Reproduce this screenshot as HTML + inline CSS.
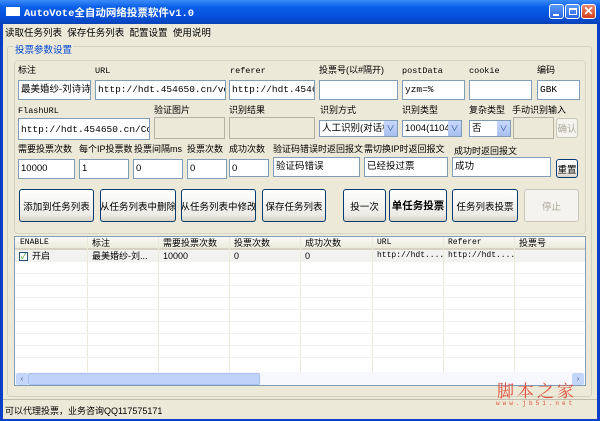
<!DOCTYPE html>
<html><head><meta charset="utf-8"><style>
*{margin:0;padding:0;box-sizing:border-box}
body{width:600px;height:421px;overflow:hidden;background:#0a3fc8;font-family:"Liberation Sans","Noto Sans CJK SC",sans-serif;font-size:10px;color:#000;position:relative}
.a{position:absolute}
#title{left:0;top:0;width:600px;height:24px;background:linear-gradient(#3a8cf8,#0a5ee8 30%,#0550dc 70%,#0842b8)}
#client{left:3px;top:24px;width:594px;height:395px;background:#ece9d8}
.tb{top:4px;width:15px;height:15px;border:1px solid #fff;border-radius:3px;background:linear-gradient(#5a9af8,#2a66e0)}
.lbl{position:absolute;font-size:9px;white-space:nowrap;line-height:12px}
.mono{font-family:"Liberation Mono",monospace;font-size:8.5px}
.in{position:absolute;background:#fff;border:1px solid #7f9db9;font-size:9.5px;padding:2px 2px;white-space:nowrap;overflow:hidden;height:20px;line-height:13px}
.gr{background:#ece9d8}
.btn{position:absolute;border:1px solid #003c74;border-radius:3px;background:linear-gradient(#fff,#ecebe6 80%,#d6d0c5);font-size:9.5px;display:flex;align-items:center;justify-content:center;white-space:nowrap}
.col{position:absolute;top:0;bottom:0;border-left:1px solid #ece9d8}
.hd{position:absolute;top:0;font-size:9px;white-space:nowrap;line-height:12px}
.dd{position:absolute;right:0;top:0;width:13px;height:15px;background:linear-gradient(#c8d8fb,#a8c0f0);color:#3050a0;font-size:8px;text-align:center;line-height:15px}
</style></head><body>
<div id="title" class="a"></div>
<div class="a" style="left:6px;top:7px;width:14px;height:9px;background:#fff"></div>
<div class="a" style="left:24px;top:5px;color:#fff;font-weight:bold;font-size:10.5px;font-family:'Liberation Mono','Noto Sans CJK SC',monospace">AutoVote全自动网络投票软件v1.0</div>
<div class="a tb" style="left:549px"><div class="a" style="left:3px;top:9px;width:6px;height:2px;background:#fff"></div></div>
<div class="a tb" style="left:565px"><div class="a" style="left:3px;top:3px;width:8px;height:7px;border:1px solid #fff;border-top-width:2px"></div></div>
<div class="a tb" style="left:581px;background:linear-gradient(#e88a70,#d4401a);color:#fff;font-weight:bold;text-align:center;line-height:13px;font-size:12px">✕</div>
<div id="client" class="a"></div>
<div class="a" style="left:5px;top:25px;font-size:9.5px">读取任务列表&nbsp; 保存任务列表&nbsp; 配置设置&nbsp; 使用说明</div>
<div class="a" style="left:7px;top:46px;width:585px;height:351px;border:1px solid #d0d0bf;border-radius:3px"></div>
<div class="a" style="left:14px;top:42px;color:#0046d5;font-size:9.5px;background:#ece9d8;padding:0 1px">投票参数设置</div>
<div class="a" style="left:14px;top:60px;width:572px;height:174px;border:1px solid #d8d5c4;border-radius:4px"></div>

<div class="lbl" style="left:18px;top:64px">标注</div>
<div class="lbl mono" style="left:95px;top:65px">URL</div>
<div class="lbl mono" style="left:230px;top:65px">referer</div>
<div class="lbl" style="left:319px;top:64px">投票号(以#隔开)</div>
<div class="lbl mono" style="left:402px;top:65px">postData</div>
<div class="lbl mono" style="left:469px;top:65px">cookie</div>
<div class="lbl" style="left:537px;top:64px">编码</div>
<div class="in" style="left:18px;top:80px;width:73px">最美婚纱-刘诗诗</div>
<div class="in mono" style="left:95px;top:80px;width:131px">http://hdt.454650.cn/vote2.as</div>
<div class="in mono" style="left:229px;top:80px;width:86px">http://hdt.454650.c</div>
<div class="in" style="left:319px;top:80px;width:79px"></div>
<div class="in mono" style="left:402px;top:80px;width:63px">yzm=%</div>
<div class="in" style="left:469px;top:80px;width:63px"></div>
<div class="in mono" style="left:537px;top:80px;width:43px">GBK</div>

<div class="lbl mono" style="left:18px;top:105px">FlashURL</div>
<div class="lbl" style="left:154px;top:104px">验证图片</div>
<div class="lbl" style="left:229px;top:104px">识别结果</div>
<div class="lbl" style="left:320px;top:104px">识别方式</div>
<div class="lbl" style="left:402px;top:104px">识别类型</div>
<div class="lbl" style="left:469px;top:104px">复杂类型</div>
<div class="lbl" style="left:512px;top:104px">手动识别输入</div>
<div class="in mono" style="left:18px;top:118px;width:132px;height:22px;padding-top:4px">http://hdt.454650.cn/Code_6.A</div>
<div class="in gr" style="left:154px;top:117px;width:71px;height:22px;border-color:#b5b2a5"></div>
<div class="in gr" style="left:229px;top:117px;width:86px;height:22px;border-color:#b5b2a5"></div>
<div class="in" style="left:319px;top:120px;width:79px;height:17px;padding:1px 2px">人工识别(对话框<div class="dd">∨</div></div>
<div class="in" style="left:402px;top:120px;width:60px;height:17px;padding:1px 2px">1004(1104)<div class="dd">∨</div></div>
<div class="in" style="left:469px;top:120px;width:42px;height:17px;padding:1px 2px">否<div class="dd">∨</div></div>
<div class="in gr" style="left:513px;top:117px;width:41px;height:22px;border-color:#b5b2a5"></div>
<div class="btn" style="left:556px;top:118px;width:22px;height:20px;border-color:#c9c7ba;color:#aca899;background:#f4f3ee">确认</div>

<div class="lbl" style="left:18px;top:143px">需要投票次数</div>
<div class="lbl" style="left:79px;top:143px">每个IP投票数</div>
<div class="lbl" style="left:134px;top:143px">投票间隔ms</div>
<div class="lbl" style="left:187px;top:143px">投票次数</div>
<div class="lbl" style="left:229px;top:143px">成功次数</div>
<div class="lbl" style="left:273px;top:143px">验证码错误时返回报文</div>
<div class="lbl" style="left:364px;top:143px">需切换IP时返回报文</div>
<div class="lbl" style="left:454px;top:145px">成功时返回报文</div>
<div class="in" style="left:18px;top:159px;width:57px">10000</div>
<div class="in" style="left:79px;top:159px;width:50px">1</div>
<div class="in" style="left:133px;top:159px;width:50px">0</div>
<div class="in" style="left:187px;top:159px;width:40px">0</div>
<div class="in" style="left:229px;top:159px;width:40px;height:18px">0</div>
<div class="in" style="left:273px;top:157px;width:87px;height:20px">验证码错误</div>
<div class="in" style="left:364px;top:157px;width:84px;height:20px">已经投过票</div>
<div class="in" style="left:452px;top:157px;width:99px;height:20px">成功</div>
<div class="btn" style="left:556px;top:159px;width:22px;height:19px">重置</div>

<div class="btn" style="left:19px;top:189px;width:75px;height:33px">添加到任务列表</div>
<div class="btn" style="left:100px;top:189px;width:76px;height:33px">从任务列表中删除</div>
<div class="btn" style="left:181px;top:189px;width:75px;height:33px">从任务列表中修改</div>
<div class="btn" style="left:262px;top:189px;width:64px;height:33px">保存任务列表</div>
<div class="btn" style="left:343px;top:189px;width:43px;height:33px">投一次</div>
<div class="btn" style="left:389px;top:189px;width:58px;height:33px;font-weight:bold;font-size:10.5px">单任务投票</div>
<div class="btn" style="left:452px;top:189px;width:66px;height:33px">任务列表投票</div>
<div class="btn" style="left:524px;top:189px;width:55px;height:33px;border-color:#c9c7ba;color:#aca899;background:#f4f3ee">停止</div>

<div class="a" style="left:14px;top:236px;width:572px;height:150px;background:#fff;border:1px solid #7f9db9;overflow:hidden">
 <div class="a" style="left:0;top:0;width:572px;height:13px;background:linear-gradient(#fafaf7,#ebeadb);border-bottom:2px solid #d6d2c2"></div>
 <div class="a" style="left:0;top:13px;width:572px;height:12px;background:#f2f2f0"></div>
 <div class="col" style="left:72px"></div><div class="col" style="left:143px"></div><div class="col" style="left:214px"></div><div class="col" style="left:285px"></div><div class="col" style="left:357px"></div><div class="col" style="left:428px"></div><div class="col" style="left:499px"></div>
 <div class="a" style="left:0;right:0;top:36px;border-top:1px solid #f0efea"></div>
 <div class="a" style="left:0;right:0;top:48px;border-top:1px solid #f0efea"></div>
 <div class="a" style="left:0;right:0;top:60px;border-top:1px solid #f0efea"></div>
 <div class="a" style="left:0;right:0;top:72px;border-top:1px solid #f0efea"></div>
 <div class="a" style="left:0;right:0;top:84px;border-top:1px solid #f0efea"></div>
 <div class="a" style="left:0;right:0;top:96px;border-top:1px solid #f0efea"></div>
 <div class="a" style="left:0;right:0;top:108px;border-top:1px solid #f0efea"></div>
 <div class="a" style="left:0;right:0;top:120px;border-top:1px solid #f0efea"></div>
 <div class="hd mono" style="left:5px;font-size:8px">ENABLE</div>
 <div class="hd" style="left:77px">标注</div>
 <div class="hd" style="left:148px">需要投票次数</div>
 <div class="hd" style="left:219px">投票次数</div>
 <div class="hd" style="left:290px">成功次数</div>
 <div class="hd mono" style="left:362px;font-size:8px">URL</div>
 <div class="hd mono" style="left:433px;font-size:8px">Referer</div>
 <div class="hd" style="left:504px">投票号</div>
 <div class="a" style="left:4px;top:15px;width:9px;height:9px;border:1px solid #1c5180;color:#21a121;font-size:8px;line-height:8px;text-align:center;background:#fff">✓</div>
 <div class="hd" style="left:17px;top:13px">开启</div>
 <div class="hd" style="left:77px;top:13px">最美婚纱-刘...</div>
 <div class="hd" style="left:148px;top:13px">10000</div>
 <div class="hd" style="left:219px;top:13px">0</div>
 <div class="hd" style="left:290px;top:13px">0</div>
 <div class="hd mono" style="left:362px;top:13px;font-size:8px">http://hdt....</div>
 <div class="hd mono" style="left:433px;top:13px;font-size:8px">http://hdt....</div>
 <div class="a" style="left:0;top:135px;width:572px;height:14px;background:#f6f8fd"></div>
 <div class="a" style="left:1px;top:136px;width:12px;height:12px;background:#c4d5fa;border-radius:2px;color:#4d6185;font-size:8px;line-height:12px;text-align:center">‹</div>
 <div class="a" style="left:13px;top:136px;width:232px;height:12px;background:#bfd2fa;border:1px solid #a9c0ee;border-radius:2px"></div>
 <div class="a" style="left:557px;top:136px;width:12px;height:12px;background:#c4d5fa;border-radius:2px;color:#4d6185;font-size:8px;line-height:12px;text-align:center">›</div>
</div>
<div class="a" style="left:497px;top:377px;color:#e0503c;font-size:17px;letter-spacing:3px;font-family:'Noto Serif CJK SC',serif">脚本之家</div>
<div class="a mono" style="left:496px;top:400px;color:#e0503c;font-size:6px;letter-spacing:3px">www.jb51.net</div>
<div class="a" style="left:3px;top:399px;width:594px;border-top:1px solid #c0bdae"></div>
<div class="a" style="left:5px;top:404px;font-size:9px">可以代理投票，业务咨询QQ117575171</div>
</body></html>
